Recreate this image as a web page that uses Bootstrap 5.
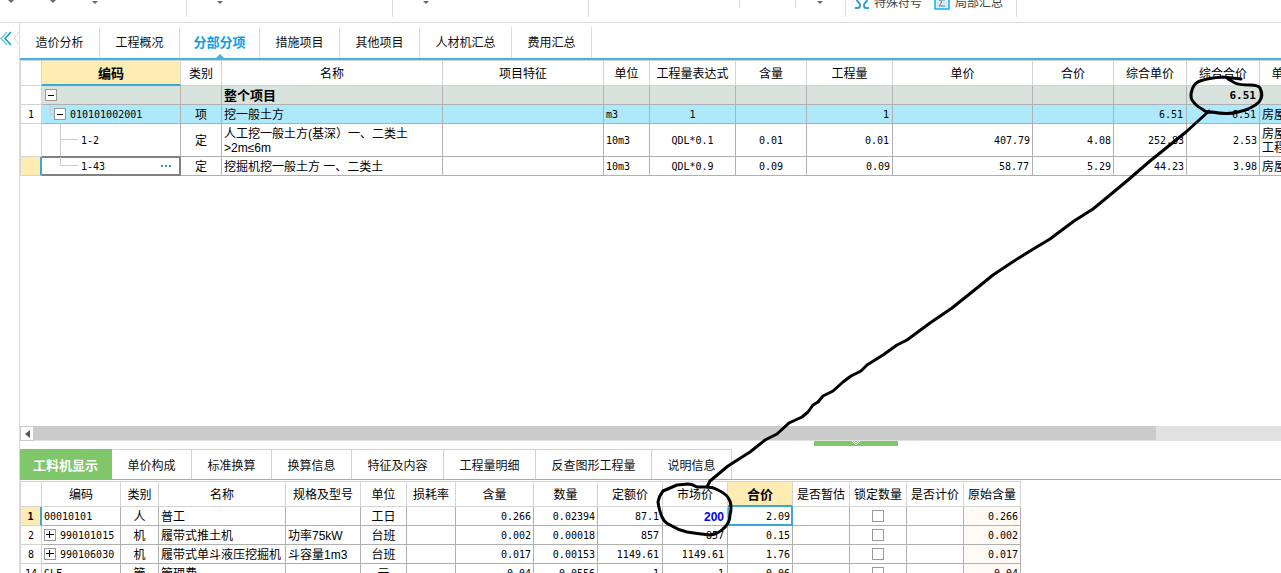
<!DOCTYPE html>
<html lang="zh-CN">
<head>
<meta charset="utf-8">
<meta name="viewport" content="width=device-width, initial-scale=1">
<title>分部分项</title>
<link href="https://cdn.jsdelivr.net/npm/bootstrap@5.3.0/dist/css/bootstrap.min.css" rel="stylesheet">
<style>
body{font-family:"Liberation Sans","Noto Sans CJK SC",sans-serif;font-size:12px;line-height:14px;color:#000;background:#fff}
/* tool bar */
.toolbar{height:23px;border-bottom:1px solid #dcdcdc}
.tool-group{height:17px;border-right:1px solid #dcdcdc;gap:36px}
.tool-group.short{height:8px}
.tool-group svg{flex:none}
.g1{width:187px;padding-left:8px}.g2{width:206px;padding-left:30px}.g3{width:196px}.g4{width:151px}.g5{width:56px}
.g6{width:50px;padding-left:21px}.g7{width:171px;padding-left:9px;gap:6px}
.g3{padding-left:30px}
.tool-btn{border:0;background:none;padding:0;height:10px;margin-right:6px;color:#444;display:flex;align-items:flex-end;gap:5px}
.tool-btn span{line-height:14px;flex:none}
/* left rail */
.rail{width:20px;flex:none;border-right:1px solid #dcdcdc}
.rail button{border:0;background:none;padding:0;margin-top:8px;display:block}
/* tabs */
.tabs-top{height:37px;padding-top:4px;border-bottom:2px solid #42b4e0}
.tabs-top .nav-link{width:80px;padding:0;line-height:32px;height:31px;text-align:center;color:#111;border:0;border-right:1px solid #dcdcdc;border-radius:0;position:relative}
.tabs-top .wide{width:92px}
.tabs-top .nav-link.active{color:#0aa0e6;font-weight:700;font-size:13px}
.tabs-top .nav-link.active::after{content:"";position:absolute;left:50%;bottom:0;margin-left:-4px;border:4px solid transparent;border-top:0;border-bottom-color:#42b4e0}
.tabs-low{height:31px;border-bottom:1px solid #80c66a}
.tabs-low .nav-link{width:80px;padding:0;height:30px;line-height:32px;text-align:center;color:#111;border:0 solid #b9e6a6;border-width:1px 1px 0 0;border-radius:0}
.tabs-low .w92{width:92px}.tabs-low .w116{width:116px}
.tabs-low .nav-link.active{background:#80c66a;color:#fff;font-weight:700;font-size:13px;border-color:#80c66a;width:92px}
/* grids */
.gridtable{table-layout:fixed;border-collapse:separate;border-spacing:0;width:0}
.gridtable th,.gridtable td{padding:2px 2px 0;border:0 solid #b0b0b0;border-right-width:1px;border-bottom-width:1px;white-space:nowrap;overflow:hidden;height:19px;vertical-align:middle}
.gridtable thead th{border-color:#d4d4d4;border-top-width:1px;height:26px;font-weight:400;text-align:center;padding:2px 0 0}
.gridtable tr>:first-child{border-left-width:1px;border-color:#d4d4d4;text-align:center;font-weight:400}
.gridtable td.tall{height:33px}
.gridtable td.has-tree{padding:0}
.gridtable thead th.hot{background:#ffecb3;font-weight:700;font-size:13px;border-bottom:2px solid #38a9d6}
.gridtable .n{font-family:"DejaVu Sans Mono","Noto Sans CJK SC",monospace;font-size:10px}
.has-tree span.n{padding-top:2px}
.r{text-align:right}.c{text-align:center}
.total td,.total th{background:#d9e3de;font-weight:700;font-size:13px}
.total>:first-child,.picked>:first-child{background:#fff}
.gridtable .total td.n{font-size:11px}
.picked td{background:#ade8fb}
.gridtable tr>.mark-row{background:#ffecb3;border-right:2px solid #38a9d6}
.gridtable td.above{border-bottom-color:#808080}
.gridtable td.focus-cell{border-color:#808080;box-shadow:inset 0 1px #808080,inset -1px -1px #808080}
.gridtable td.focus-blue{border-color:#38a9d6;box-shadow:inset 1px 0 #38a9d6,inset -1px -1px #38a9d6}
.gridtable td.edited{color:#0000f0;font-weight:700;font-size:12px}
.gridtable td.orig{background:#fffaf5}
.tree{height:18px}
.tree.tall{height:32px}
.tree svg{flex:none;display:block}
.toggler{width:12px;height:12px;flex:none;padding:0;border:1px solid #999;background:#fff;display:block;margin-bottom:1px}
.toggler svg{display:block}
.more{border:0;background:none;padding:0;margin-left:auto;margin-right:8px;display:block}
.tick{appearance:none;width:12px;height:12px;border:1px solid #999;background:#fff;margin:0 auto 2px;display:block}
.gridtable .r-pad{padding-right:3px}
/* scroll bar and splitter */
.hscroll{height:15px;background:#e1e1e1}
.hscroll button{width:14px;padding:0;border:1px solid #cbcbcb;background:#fff;display:flex;align-items:center;justify-content:center}
.thumb{width:89%;background:#cbcbcb;height:14px}
.splitter{height:8px;padding-left:63%}
.splitter button{width:84px;height:5px;padding:0;border:0;background:#80c66a;display:block}
.splitter svg{display:block;margin:auto}
.lower{height:124px;flex:none}
.ink{position:absolute;left:0;top:0;pointer-events:none}
</style>
</head>
<body class="vh-100 overflow-hidden d-flex flex-column position-relative">
<header class="toolbar d-flex align-items-start flex-shrink-0">
  <div class="tool-group g1 d-flex"><svg width="6" height="3"><path d="M0 0h6L3 3z" fill="#667"/></svg><svg width="6" height="3"><path d="M0 0h6L3 3z" fill="#667"/></svg><svg width="6" height="4"><path d="M0 1h6L3 4z" fill="#667"/></svg></div>
  <div class="tool-group g2 d-flex"><svg width="6" height="4"><path d="M0 1h6L3 4z" fill="#667"/></svg></div>
  <div class="tool-group g3 d-flex"><svg width="6" height="4"><path d="M0 1h6L3 4z" fill="#667"/></svg></div>
  <div class="tool-group g4 short"></div>
  <div class="tool-group g5 short"></div>
  <div class="tool-group g6 d-flex"><svg width="6" height="4"><path d="M0 1h6L3 4z" fill="#667"/></svg></div>
  <div class="tool-group g7 d-flex">
    <button class="tool-btn" type="button"><svg width="14" height="10"><path d="M2 0c0 2 3 3 3 5s-1 3-2 3H0M12 0c0 2-3 3-3 5s1 3 2 3h3" fill="none" stroke="#2b9fd9" stroke-width="2"/></svg><span>特殊符号</span></button>
    <button class="tool-btn" type="button"><svg width="16" height="10"><path d="M1 -2V9h14V-2" fill="#d9f2fc" stroke="#12b0f0" stroke-width="1.500"/><path d="M3 3h10M3 6h10" stroke="#e8d9a0" stroke-dasharray="2 1"/><path d="M11 0H5l3 2-3 4h6" fill="none" stroke="#5b86a0"/></svg><span>局部汇总</span></button>
  </div>
</header>

<div class="d-flex flex-grow-1 overflow-hidden">
  <aside class="rail"><button type="button" aria-label="收起"><svg width="19" height="16" fill="none"><path d="M7 1L1 7.500l6 6.500" stroke="#6cc4dc" stroke-width="1.300"/><path d="M11 1L5 7.500l6 6.500" stroke="#0a9cc4" stroke-width="1.600"/><path d="M19 1l-5 6 5 6" stroke="#dcdcdc"/></svg></button></aside>
  <main class="flex-grow-1 overflow-hidden d-flex flex-column">
    <nav class="nav tabs-top flex-nowrap flex-shrink-0">
      <a class="nav-link" href="#">造价分析</a><a class="nav-link" href="#">工程概况</a><a class="nav-link active" href="#">分部分项</a><a class="nav-link" href="#">措施项目</a><a class="nav-link" href="#">其他项目</a><a class="nav-link wide" href="#">人材机汇总</a><a class="nav-link" href="#">费用汇总</a>
    </nav>
    <div class="flex-grow-1 overflow-hidden">
      <table class="gridtable">
        <colgroup><col style="width:22px"><col style="width:139px"><col style="width:41px"><col style="width:221px"><col style="width:161px"><col style="width:46px"><col style="width:86px"><col style="width:71px"><col style="width:86px"><col style="width:140px"><col style="width:81px"><col style="width:73px"><col style="width:73px"><col style="width:36px"></colgroup>
        <thead><tr><th></th><th class="hot">编码</th><th>类别</th><th>名称</th><th>项目特征</th><th>单位</th><th>工程量表达式</th><th>含量</th><th>工程量</th><th>单价</th><th>合价</th><th>综合单价</th><th>综合合价</th><th>单</th></tr></thead>
        <tbody>
          <tr class="total"><th></th><td class="has-tree"><div class="tree d-flex align-items-center"><svg width="3" height="18"></svg><button class="toggler" type="button" aria-label="折叠"><svg width="10" height="10"><path d="M2 5.500h6" stroke="#000"/></svg></button></div></td><td></td><td>整个项目</td><td></td><td></td><td></td><td></td><td></td><td></td><td></td><td></td><td class="n r r-pad">6.51</td><td></td></tr>
          <tr class="picked"><th class="n">1</th><td class="has-tree"><div class="tree d-flex align-items-center"><svg width="12" height="18"><path d="M8.500 0v9.500H12" fill="none" stroke="#ccc"/></svg><button class="toggler" type="button" aria-label="折叠"><svg width="10" height="10"><path d="M2 5.500h6" stroke="#000"/></svg></button><span class="n ms-1">010101002001</span></div></td><td class="c">项</td><td>挖一般土方</td><td></td><td class="n">m3</td><td class="n c">1</td><td></td><td class="n r r-pad">1</td><td></td><td></td><td class="n r r-pad">6.51</td><td class="n r r-pad">6.51</td><td>房屋</td></tr>
          <tr><th></th><td class="tall above has-tree"><div class="tree tall d-flex align-items-center"><svg width="39" height="32"><path d="M18.500 0v32M18.500 15.500H36" fill="none" stroke="#ccc"/></svg><span class="n">1-2</span></div></td><td class="c">定</td><td>人工挖一般土方(基深）一、二类土<br>&gt;2m≤6m</td><td></td><td class="n">10m3</td><td class="n c">QDL*0.1</td><td class="n c">0.01</td><td class="n r r-pad">0.01</td><td class="n r">407.79</td><td class="n r">4.08</td><td class="n r">252.83</td><td class="n r">2.53</td><td>房屋<br>工程</td></tr>
          <tr><th class="mark-row"></th><td class="focus-cell has-tree"><div class="tree d-flex align-items-center"><svg width="39" height="18"><path d="M18.500 0v8.500H36" fill="none" stroke="#ccc"/></svg><span class="n">1-43</span><button class="more" type="button" aria-label="更多"><svg width="12" height="4"><path d="M1 1h2v2H1zM5 1h2v2H5zM9 1h2v2H9z" fill="#3b8fd4"/></svg></button></div></td><td class="c">定</td><td>挖掘机挖一般土方 一、二类土</td><td></td><td class="n">10m3</td><td class="n c">QDL*0.9</td><td class="n c">0.09</td><td class="n r">0.09</td><td class="n r r-pad">58.77</td><td class="n r">5.29</td><td class="n r">44.23</td><td class="n r">3.98</td><td>房屋</td></tr>
        </tbody>
      </table>
    </div>
    <div class="hscroll d-flex flex-shrink-0"><button type="button" aria-label="向左滚动"><svg width="5" height="8"><path d="M5 0v8L0 4z" fill="#556"/></svg></button><div class="thumb"></div></div>
    <div class="splitter flex-shrink-0"><button type="button" aria-label="收起面板"><svg width="10" height="5" fill="none" stroke="#fff"><path d="M1 0l4 4 4-4M3 0l2 2 2-2"/></svg></button></div>
    <section class="lower overflow-hidden">
      <nav class="nav tabs-low flex-nowrap">
        <a class="nav-link active" href="#">工料机显示</a><a class="nav-link" href="#">单价构成</a><a class="nav-link" href="#">标准换算</a><a class="nav-link" href="#">换算信息</a><a class="nav-link w92" href="#">特征及内容</a><a class="nav-link w92" href="#">工程量明细</a><a class="nav-link w116" href="#">反查图形工程量</a><a class="nav-link" href="#">说明信息</a>
      </nav>
      <div style="padding-top:1px">
      <table class="gridtable">
        <colgroup><col style="width:22px"><col style="width:79px"><col style="width:38px"><col style="width:127px"><col style="width:75px"><col style="width:46px"><col style="width:49px"><col style="width:78px"><col style="width:64px"><col style="width:65px"><col style="width:65px"><col style="width:65px"><col style="width:57px"><col style="width:57px"><col style="width:57px"><col style="width:57px"></colgroup>
        <thead><tr><th></th><th>编码</th><th>类别</th><th>名称</th><th>规格及型号</th><th>单位</th><th>损耗率</th><th>含量</th><th>数量</th><th>定额价</th><th>市场价</th><th class="hot">合价</th><th>是否暂估</th><th>锁定数量</th><th>是否计价</th><th>原始含量</th></tr></thead>
        <tbody>
          <tr><th class="n mark-row"><b>1</b></th><td class="n">00010101</td><td class="c">人</td><td>普工</td><td></td><td class="c">工日</td><td></td><td class="n r">0.266</td><td class="n r">0.02394</td><td class="n r r-pad">87.1</td><td class="edited r r-pad">200</td><td class="n r focus-blue">2.09</td><td></td><td><input class="tick" type="checkbox" aria-label="锁定数量"></td><td></td><td class="n r orig">0.266</td></tr>
          <tr><th class="n">2</th><td class="has-tree"><div class="tree d-flex align-items-center"><svg width="2" height="18"></svg><button class="toggler" type="button" aria-label="展开"><svg width="10" height="10"><path d="M1 4.500h8M4.500 1v7" stroke="#000"/></svg></button><span class="n ms-1">990101015</span></div></td><td class="c">机</td><td>履带式推土机</td><td>功率75kW</td><td class="c">台班</td><td></td><td class="n r">0.002</td><td class="n r">0.00018</td><td class="n r r-pad">857</td><td class="n r r-pad">857</td><td class="n r">0.15</td><td></td><td><input class="tick" type="checkbox" aria-label="锁定数量"></td><td></td><td class="n r orig">0.002</td></tr>
          <tr><th class="n">8</th><td class="has-tree"><div class="tree d-flex align-items-center"><svg width="2" height="18"></svg><button class="toggler" type="button" aria-label="展开"><svg width="10" height="10"><path d="M1 4.500h8M4.500 1v7" stroke="#000"/></svg></button><span class="n ms-1">990106030</span></div></td><td class="c">机</td><td>履带式单斗液压挖掘机</td><td>斗容量1m3</td><td class="c">台班</td><td></td><td class="n r">0.017</td><td class="n r">0.00153</td><td class="n r r-pad">1149.61</td><td class="n r r-pad">1149.61</td><td class="n r">1.76</td><td></td><td><input class="tick" type="checkbox" aria-label="锁定数量"></td><td></td><td class="n r orig">0.017</td></tr>
          <tr><th class="n">14</th><td class="n">GLF</td><td class="c">管</td><td>管理费</td><td></td><td class="c">元</td><td></td><td class="n r">0.04</td><td class="n r">0.0556</td><td class="n r r-pad">1</td><td class="n r r-pad">1</td><td class="n r">0.06</td><td></td><td><input class="tick" type="checkbox" aria-label="锁定数量"></td><td></td><td class="n r orig">0.04</td></tr>
        </tbody>
      </table>
      </div>
    </section>
  </main>
</div>

<!-- freehand note linking the edited market price to the total -->
<svg class="ink" width="1281" height="573" viewBox="0 0 1281 573" fill="none" stroke="#000" stroke-width="3" stroke-linejoin="round" stroke-linecap="round" aria-hidden="true">
  <path d="M1241 79L1223 77Q1208 78 1200 81Q1194 83 1192 90Q1190 96 1192 100Q1196 106 1202 109Q1206 113 1212 112Q1228 115 1238 112Q1252 109 1259 102Q1264 96 1260 88Q1258 85 1250 85Q1239 85 1235 83L1228 79"/>
  <path d="M1209 111L1186 132 1150 161 1128 180 1110 195 1093 209 1074 221 1050 239 1030 251 1011 263 993 275 977 288 952 308 930 323 907 340 897 345 883 355 867 365 861 371 851 376 843 382 833 391 823 396 818 402 813 405 808 412 802 417 789 423 777 434 765 440 750 452 728 466 710 481 707 487"/>
  <path d="M707 487H697Q692 484 688 484L677 485 663 491Q659 496 658 502Q659 510 662 517Q665 523 670 525Q678 530 687 532Q700 534 710 535Q718 534 723 529Q730 523 730 515Q732 508 730 501Q727 494 718 490Q713 487 707 487"/>
</svg>
<script src="https://cdn.jsdelivr.net/npm/bootstrap@5.3.0/dist/js/bootstrap.bundle.min.js"></script>
</body>
</html>
